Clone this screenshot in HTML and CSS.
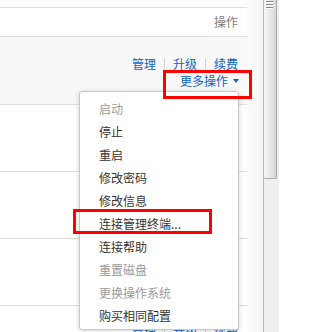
FILE: index.html
```html
<!DOCTYPE html>
<html lang="zh-CN">
<head>
<meta charset="utf-8">
<title>更多操作</title>
<link rel="stylesheet" href="styles.css">
</head>
<body>
<div class="screen">
  <div class="table">
    <div class="top-space"></div>
    <div class="head">操作</div>
    <div class="row row-hover">
      <div class="links"><a>管理</a><span class="sep"></span><a>升级</a><span class="sep"></span><a>续费</a></div>
      <div class="more"><a>更多操作</a><span class="caret"></span></div>
    </div>
    <div class="row">
      <div class="links"><a>管理</a><span class="sep"></span><a>升级</a><span class="sep"></span><a>续费</a></div>
      <div class="more"><a>更多操作</a><span class="caret"></span></div>
    </div>
    <div class="row">
      <div class="links"><a>管理</a><span class="sep"></span><a>升级</a><span class="sep"></span><a>续费</a></div>
      <div class="more"><a>更多操作</a><span class="caret"></span></div>
    </div>
    <div class="row">
      <div class="links"><a>管理</a><span class="sep"></span><a>升级</a><span class="sep"></span><a>续费</a></div>
      <div class="more"><a>更多操作</a><span class="caret"></span></div>
    </div>
    <div class="row">
      <div class="links"><a>管理</a><span class="sep"></span><a>升级</a><span class="sep"></span><a>续费</a></div>
      <div class="more"><a>更多操作</a><span class="caret"></span></div>
    </div>
  </div>
  <div class="gutter"></div>
  <div class="scrollbar">
    <div class="thumb">
      <div class="grip"></div>
      <div class="grip"></div>
      <div class="grip"></div>
    </div>
  </div>

  <ul class="menu">
    <li class="disabled">启动</li>
    <li>停止</li>
    <li>重启</li>
    <li>修改密码</li>
    <li>修改信息</li>
    <li>连接管理终端...</li>
    <li>连接帮助</li>
    <li class="disabled">重置磁盘</li>
    <li class="disabled">更换操作系统</li>
    <li>购买相同配置</li>
  </ul>

  <div class="mark mark-more"></div>
  <div class="mark mark-terminal"></div>
</div>
</body>
</html>
```

FILE: styles.css
```css
html, body {
  margin: 0;
  padding: 0;
  background: #fff;
}

body {
  font-family: "Noto Sans CJK SC", "Noto Sans", sans-serif;
  font-size: 12px;
  color: #333;
}

.screen {
  position: relative;
  display: flex;
  width: 279px;
  height: 332px;
  overflow: hidden;
}

.table {
  width: 247px;
  flex: none;
}

.top-space {
  height: 7px;
  border-bottom: 1px solid #dedede;
}

.head {
  height: 28px;
  line-height: 28px;
  text-align: right;
  padding-right: 9px;
  color: #808080;
  border-bottom: 1px solid #dedede;
}

.row {
  height: 66px;
  display: flex;
  flex-direction: column;
  justify-content: center;
  align-items: flex-end;
  padding-right: 9px;
  border-bottom: 1px solid #dedede;
}

.row-hover {
  height: 65px;
  padding-top: 2px;
  background: #f8f8f8;
}

.links,
.more {
  display: flex;
  align-items: center;
  height: 17px;
  line-height: 17px;
}

.links a,
.more a {
  color: #0a64c2;
  text-decoration: none;
}

.sep {
  width: 1px;
  height: 11px;
  background: #d0d0d0;
  margin: 0 8px 0 8px;
}

.more {
  margin-right: -1px;
}

.caret {
  width: 0;
  height: 0;
  margin-left: 5px;
  margin-top: 1px;
  border-left: 3px solid transparent;
  border-right: 3px solid transparent;
  border-top: 4px solid #0a64c2;
}

.gutter {
  width: 16px;
  flex: none;
  background: linear-gradient(to right, #fbfbfb, #f6f6f6);
}

.scrollbar {
  width: 15px;
  flex: none;
  background: #efefef;
  border-left: 1px solid #b8b8b8;
}

.thumb {
  width: 12px;
  height: 177px;
  background: linear-gradient(to right, #f6f6f6, #e6e6e6 60%, #d4d4d4);
  border: 1px solid #a9a9a9;
  border-top: none;
  border-left: none;
  border-radius: 0 0 2px 2px;
  padding-top: 1px;
}

.grip {
  width: 7px;
  height: 1px;
  margin: 0 auto 1px 2px;
  background: #8a8a8a;
  border-bottom: 1px solid #fff;
}

.menu {
  position: absolute;
  left: 79px;
  top: 91px;
  width: 160px;
  height: 239px;
  box-sizing: border-box;
  margin: 0;
  padding: 5px 0 1px;
  list-style: none;
  background: #fff;
  border: 1px solid #c8c8c8;
  border-radius: 3px;
  box-shadow: 0 1px 5px rgba(0, 0, 0, 0.18);
}

.menu li {
  height: 23px;
  line-height: 23px;
  padding-left: 19px;
  color: #333;
  white-space: nowrap;
}

.menu li.disabled {
  color: #9a9a9a;
}

.mark {
  position: absolute;
  border: 3px solid #ff0000;
  box-sizing: border-box;
}

.mark-more {
  left: 163px;
  top: 70px;
  width: 89px;
  height: 29px;
}

.mark-terminal {
  left: 73px;
  top: 209px;
  width: 139px;
  height: 25px;
}
```
